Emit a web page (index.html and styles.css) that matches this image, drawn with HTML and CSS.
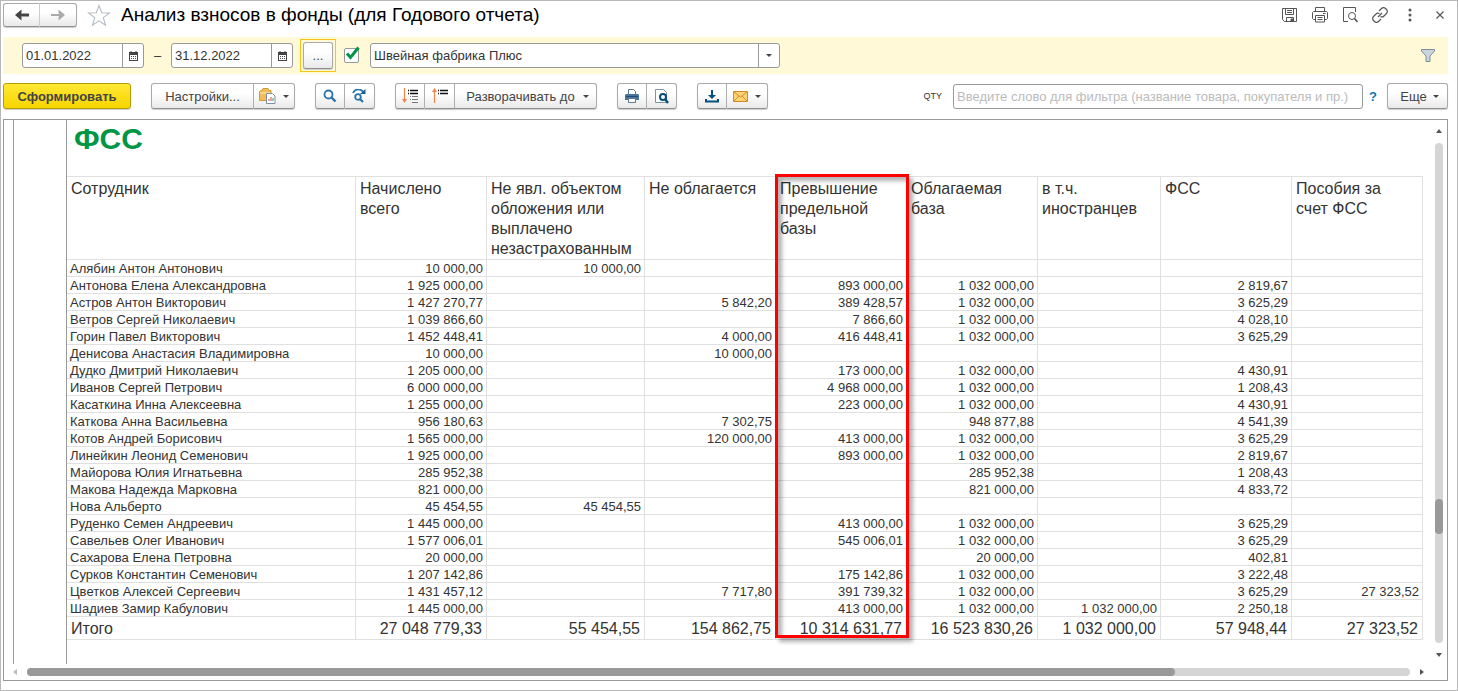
FILE: index.html
```html
<!DOCTYPE html>
<html lang="ru">
<head>
<meta charset="utf-8">
<title>Анализ взносов в фонды</title>
<link rel="stylesheet" href="styles.css">
</head>
<body>
<main class="window">
  <header class="titlebar">
    <div class="group nav">
      <button class="btn" aria-label="Назад"><svg width="14" height="12" viewBox="0 0 14 12"><path d="M4 6h10" stroke="#444" stroke-width="3"/><path d="M0 6L6.500.5V4L5 6l1.500 2v3.500z" fill="#444"/></svg></button>
      <button class="btn light" aria-label="Вперед"><svg width="14" height="12" viewBox="0 0 14 12"><path d="M0 6h10" stroke="#aaa" stroke-width="2"/><path d="M14 6L7.500.5V4L9 6 7.500 8v3.500z" fill="#aaa"/></svg></button>
    </div>
    <button class="plain star" aria-label="В избранное"><svg width="24" height="23" viewBox="0 0 24 23"><path d="M12 1.500l2.700 7.200 7.800.2-6.200 4.700 2.200 7.700L12 16.900l-6.500 4.400 2.200-7.700L1.500 8.900l7.800-.2z" fill="#fff" stroke="#b3bac3" stroke-width="1.100"/></svg></button>
    <h1 class="title">Анализ взносов в фонды (для Годового отчета)</h1>
    <div class="window-tools">
      <button class="plain" aria-label="Сохранить"><svg width="16" height="16" viewBox="0 0 16 16" fill="none" stroke="#555"><path d="M.5 1.500h14v13h-12l-2-2zM3.500 1.500v6h8v-6M5 3.500h5M5 5.500h5M4.500 14.500v-4h7v4"/><path d="M9 12h2v2H9z" fill="#555"/></svg></button>
      <button class="plain" aria-label="Печать"><svg width="16" height="16" viewBox="0 0 16 16" fill="none" stroke="#555"><path d="M3.500 4.500v-4h9v4M3.500 12.500h-2l-1-1v-6l1-1h13l1 1v6l-1 1h-2M3.500 8.500h9v6.500h-9zM5.500 10.500h5M5.500 12.500h5M11 6.500h2.500"/></svg></button>
      <button class="plain" aria-label="Просмотр"><svg width="16" height="16" viewBox="0 0 16 16" fill="none" stroke="#555"><path d="M6 14.500H1.500v-14h12V5"/><circle cx="10" cy="9" r="3.500"/><path d="M12.500 11.500l3 3.500" stroke-width="1.600"/></svg></button>
      <button class="plain" aria-label="Ссылка"><svg width="16" height="16" viewBox="0 0 16 16" fill="none" stroke="#555" stroke-width="1.200"><path d="M7 4l2.500-2.500a2.800 2.800 0 0 1 4 0l1 1a2.800 2.800 0 0 1 0 4L12 9a2.800 2.800 0 0 1-3.500.5M9 12l-2.500 2.500a2.800 2.800 0 0 1-4 0l-1-1a2.800 2.800 0 0 1 0-4L4 7a2.800 2.800 0 0 1 3.500-.5M6 10l4-4"/></svg></button>
      <button class="plain" aria-label="Меню"><svg width="16" height="16" viewBox="0 0 16 16" fill="#555"><circle cx="8" cy="3" r="1.500"/><circle cx="8" cy="8" r="1.500"/><circle cx="8" cy="13" r="1.500"/></svg></button>
      <button class="plain" aria-label="Закрыть"><svg width="16" height="16" viewBox="0 0 16 16"><path d="M4.500 4.500l7 7M11.500 4.500l-7 7" stroke="#555" stroke-width="1.200"/></svg></button>
    </div>
  </header>

  <section class="filters">
    <div class="field date">
      <input type="text" aria-label="Начало периода" value="01.01.2022">
      <button aria-label="Выбрать дату начала"><svg width="9" height="10" viewBox="0 0 9 10"><path d="M0 1h9v9H0z" fill="#444"/><path d="M1 4h7v5H1z" fill="#fff"/><path d="M2 0v2M7 0v2" stroke="#444"/><path d="M2 5.500h5M2 7.500h5" stroke="#444" stroke-dasharray="1 1"/></svg></button>
    </div>
    <span class="dash">–</span>
    <div class="field date">
      <input type="text" aria-label="Конец периода" value="31.12.2022">
      <button aria-label="Выбрать дату конца"><svg width="9" height="10" viewBox="0 0 9 10"><path d="M0 1h9v9H0z" fill="#444"/><path d="M1 4h7v5H1z" fill="#fff"/><path d="M2 0v2M7 0v2" stroke="#444"/><path d="M2 5.500h5M2 7.500h5" stroke="#444" stroke-dasharray="1 1"/></svg></button>
    </div>
    <div class="focus"><button class="btn dots" aria-label="Выбрать период">...</button></div>
    <label class="check"><input type="checkbox" checked aria-label="Организация"><svg width="16" height="16" viewBox="0 0 16 16"><path d="M3 7.500l3.500 4L14.500 1.500" fill="none" stroke="#009646" stroke-width="3"/></svg></label>
    <div class="field company">
      <input type="text" aria-label="Название организации" value="Швейная фабрика Плюс">
      <button aria-label="Выбрать организацию"><i class="caret"></i></button>
    </div>
    <button class="plain funnel" aria-label="Фильтр"><svg width="14" height="13" viewBox="0 0 14 13"><path d="M.5.5h13v1.500L9 7v5.500H5V7L.5 2z" fill="#cbd5df" stroke="#7f8b97"/></svg></button>
  </section>

  <section class="toolbar">
    <button class="btn primary">Сформировать</button>
    <div class="group settings">
      <button class="btn wide">Настройки...</button>
      <button class="btn drop" aria-label="Варианты отчета"><svg width="17" height="16" viewBox="0 0 17 16"><path d="M.5 12.500v-9l1.500-1h1l1-2h5l1 2h2v10z" fill="#f1bd59" stroke="#d19a32"/><path d="M1 5h10" stroke="#fff0bd"/><path d="M7.500 5.500h6l2.500 2.500v7.500H7.500z" fill="#fff" stroke="#7c91a4"/><path d="M10 13v-2" stroke="#bd4778"/><path d="M12 13V9" stroke="#e1482e"/><path d="M14 13v-3" stroke="#2b9a57"/></svg><i class="caret"></i></button>
    </div>
    <div class="group">
      <button class="btn icon" aria-label="Найти"><svg width="14" height="14" viewBox="0 0 14 14" fill="none" stroke="#2973a9"><circle cx="5.500" cy="5.500" r="4" stroke-width="1.800"/><path d="M8.500 8.500l4 4" stroke-width="2.400"/></svg></button>
      <button class="btn icon" aria-label="Найти далее"><svg width="15" height="14" viewBox="0 0 15 14" fill="none" stroke="#2973a9"><path d="M1 4C3-.5 8-.5 11 2.500" stroke-width="1.800"/><path d="M13.500 0v5H8z" fill="#17618f" stroke="none"/><circle cx="6" cy="8" r="2.800" stroke-width="1.800"/><path d="M8 10l3 3" stroke-width="2.200"/></svg></button>
    </div>
    <div class="group">
      <button class="btn icon" aria-label="Развернуть"><svg width="16" height="16" viewBox="0 0 16 16"><path d="M2.500 0v13" stroke="#f58247" stroke-width="1.200"/><path d="M0 11h5l-2.500 4z" fill="#f58247"/><path d="M6 2.500h1M8 2.500h8M6 5.500h1M8 5.500h8" stroke="#111" stroke-width="1.400"/><path d="M8 8.500h1M10 8.500h6M8 11.500h1M10 11.500h6M10 14.500h6" stroke="#777"/></svg></button>
      <button class="btn icon" aria-label="Свернуть"><svg width="16" height="16" viewBox="0 0 16 16"><path d="M2.500 3v12" stroke="#f58247" stroke-width="1.200"/><path d="M0 4h5L2.500 0z" fill="#f58247"/><path d="M6 2.500h1M8 2.500h8M6 5.500h1M8 5.500h8" stroke="#111" stroke-width="1.400"/></svg></button>
      <button class="btn expand">Разворачивать до<i class="caret"></i></button>
    </div>
    <div class="group">
      <button class="btn icon" aria-label="Печать отчета"><svg width="14" height="14" viewBox="0 0 14 14"><path d="M3.500 6V.5h5L10.500 2.500V6" fill="#fff" stroke="#60788c"/><path d="M1 5h12l1 1v5H0V6z" fill="#49759d"/><path d="M1 7.500h12" stroke="#194e78"/><path d="M3.500 9.500h7v4h-7z" fill="#fff" stroke="#60788c"/></svg></button>
      <button class="btn icon" aria-label="Предварительный просмотр"><svg width="14" height="15" viewBox="0 0 14 15"><path d="M.5.5h8l3 3v10H.5z" fill="#fff" stroke="#7e92a5"/><circle cx="8" cy="8" r="3" fill="#fff" stroke="#054e7d" stroke-width="2"/><path d="M10 10l3 4" stroke="#054e7d" stroke-width="2.400"/></svg></button>
    </div>
    <div class="group">
      <button class="btn icon" aria-label="Сохранить отчет"><svg width="14" height="13" viewBox="0 0 14 13"><path d="M7 0v8M1 9v2.500h12V9" fill="none" stroke="#054e7d" stroke-width="2"/><path d="M3 5h8L7 9z" fill="#054e7d"/></svg></button>
      <button class="btn drop" aria-label="Отправить"><svg width="15" height="11" viewBox="0 0 15 11"><path d="M.5.5h14v10H.5z" fill="#ffd477" stroke="#d18b26"/><path d="M1 1l6.500 5L14 1M1 10l5-5M14 10L9 5" fill="none" stroke="#d18b26"/></svg><i class="caret"></i></button>
    </div>
    <label class="qty" for="search">QTY</label>
    <input id="search" class="search" type="text" placeholder="Введите слово для фильтра (название товара, покупателя и пр.)">
    <a class="help" href="#">?</a>
    <button class="btn more">Еще<i class="caret"></i></button>
  </section>

  <section class="sheet">
    <div class="gutter"></div>
    <div class="groups"></div>
    <article class="report">
      <h2>ФСС</h2>
      <div class="table-box">
        <table>
          <colgroup><col class="c-name"><col class="c-131"><col class="c-158"><col class="c-131"><col class="c-131"><col class="c-131"><col class="c-123"><col class="c-131"><col class="c-131"></colgroup>
          <thead><tr><th>Сотрудник</th><th>Начислено всего</th><th>Не явл. объектом обложения или выплачено незастрахованным</th><th>Не облагается</th><th>Превышение предельной базы</th><th>Облагаемая база</th><th>в т.ч. иностранцев</th><th>ФСС</th><th>Пособия за счет ФСС</th></tr></thead>
          <tbody>
            <tr><td>Алябин Антон Антонович</td><td>10 000,00</td><td>10 000,00</td><td></td><td></td><td></td><td></td><td></td><td></td></tr>
            <tr><td>Антонова Елена Александровна</td><td>1 925 000,00</td><td></td><td></td><td>893 000,00</td><td>1 032 000,00</td><td></td><td>2 819,67</td><td></td></tr>
            <tr><td>Астров Антон Викторович</td><td>1 427 270,77</td><td></td><td>5 842,20</td><td>389 428,57</td><td>1 032 000,00</td><td></td><td>3 625,29</td><td></td></tr>
            <tr><td>Ветров Сергей Николаевич</td><td>1 039 866,60</td><td></td><td></td><td>7 866,60</td><td>1 032 000,00</td><td></td><td>4 028,10</td><td></td></tr>
            <tr><td>Горин Павел Викторович</td><td>1 452 448,41</td><td></td><td>4 000,00</td><td>416 448,41</td><td>1 032 000,00</td><td></td><td>3 625,29</td><td></td></tr>
            <tr><td>Денисова Анастасия Владимировна</td><td>10 000,00</td><td></td><td>10 000,00</td><td></td><td></td><td></td><td></td><td></td></tr>
            <tr><td>Дудко Дмитрий Николаевич</td><td>1 205 000,00</td><td></td><td></td><td>173 000,00</td><td>1 032 000,00</td><td></td><td>4 430,91</td><td></td></tr>
            <tr><td>Иванов Сергей Петрович</td><td>6 000 000,00</td><td></td><td></td><td>4 968 000,00</td><td>1 032 000,00</td><td></td><td>1 208,43</td><td></td></tr>
            <tr><td>Касаткина Инна Алексеевна</td><td>1 255 000,00</td><td></td><td></td><td>223 000,00</td><td>1 032 000,00</td><td></td><td>4 430,91</td><td></td></tr>
            <tr><td>Каткова Анна Васильевна</td><td>956 180,63</td><td></td><td>7 302,75</td><td></td><td>948 877,88</td><td></td><td>4 541,39</td><td></td></tr>
            <tr><td>Котов Андрей Борисович</td><td>1 565 000,00</td><td></td><td>120 000,00</td><td>413 000,00</td><td>1 032 000,00</td><td></td><td>3 625,29</td><td></td></tr>
            <tr><td>Линейкин Леонид Семенович</td><td>1 925 000,00</td><td></td><td></td><td>893 000,00</td><td>1 032 000,00</td><td></td><td>2 819,67</td><td></td></tr>
            <tr><td>Майорова Юлия Игнатьевна</td><td>285 952,38</td><td></td><td></td><td></td><td>285 952,38</td><td></td><td>1 208,43</td><td></td></tr>
            <tr><td>Макова Надежда Марковна</td><td>821 000,00</td><td></td><td></td><td></td><td>821 000,00</td><td></td><td>4 833,72</td><td></td></tr>
            <tr><td>Нова Альберто</td><td>45 454,55</td><td>45 454,55</td><td></td><td></td><td></td><td></td><td></td><td></td></tr>
            <tr><td>Руденко Семен Андреевич</td><td>1 445 000,00</td><td></td><td></td><td>413 000,00</td><td>1 032 000,00</td><td></td><td>3 625,29</td><td></td></tr>
            <tr><td>Савельев Олег Иванович</td><td>1 577 006,01</td><td></td><td></td><td>545 006,01</td><td>1 032 000,00</td><td></td><td>3 625,29</td><td></td></tr>
            <tr><td>Сахарова Елена Петровна</td><td>20 000,00</td><td></td><td></td><td></td><td>20 000,00</td><td></td><td>402,81</td><td></td></tr>
            <tr><td>Сурков Константин Семенович</td><td>1 207 142,86</td><td></td><td></td><td>175 142,86</td><td>1 032 000,00</td><td></td><td>3 222,48</td><td></td></tr>
            <tr><td>Цветков Алексей Сергеевич</td><td>1 431 457,12</td><td></td><td>7 717,80</td><td>391 739,32</td><td>1 032 000,00</td><td></td><td>3 625,29</td><td>27 323,52</td></tr>
            <tr><td>Шадиев Замир Кабулович</td><td>1 445 000,00</td><td></td><td></td><td>413 000,00</td><td>1 032 000,00</td><td>1 032 000,00</td><td>2 250,18</td><td></td></tr>
          </tbody>
          <tfoot><tr><td>Итого</td><td>27 048 779,33</td><td>55 454,55</td><td>154 862,75</td><td>10 314 631,77</td><td>16 523 830,26</td><td>1 032 000,00</td><td>57 948,44</td><td>27 323,52</td></tr></tfoot>
        </table>
        <div class="highlight"></div>
      </div>
    </article>
    <div class="vscroll"><i class="arrow up"></i><div class="vtrack"><div class="vthumb"></div></div><i class="arrow down"></i></div>
    <div class="hscroll"><i class="arrow left"></i><div class="htrack"><div class="hthumb"></div></div><i class="arrow right"></i></div>
  </section>
</main>
</body>
</html>
```
FILE: styles.css
```css
* { box-sizing: border-box; }
body { margin: 0; background: #fff; color: #333; font: 13px "Liberation Sans", Arial, sans-serif; }
button, input { font: inherit; color: inherit; }
button { padding: 0; cursor: pointer; }
svg { display: block; flex: none; }

.window { min-height: 100vh; display: flex; flex-direction: column; border: 1px solid #b8b8b8; padding: 0 9px 9px 2px; }

.plain { border: 0; background: none; }
.btn { display: flex; align-items: center; justify-content: center; height: 26px; border: 1px solid #aaa; border-bottom-color: #8f8f8f; border-radius: 3px; background: linear-gradient(#fff 40%, #e9e9e9); box-shadow: 0 1px 1px #ccc; color: #444; }
.group { display: flex; }
.group .btn:not(:first-child) { border-left: 0; border-top-left-radius: 0; border-bottom-left-radius: 0; }
.group .btn:not(:last-child) { border-top-right-radius: 0; border-bottom-right-radius: 0; }
.caret { width: 0; height: 0; border: 3px solid transparent; border-top-color: #444; border-bottom: 0; }

.titlebar { display: flex; align-items: center; height: 36px; padding-bottom: 8px; }
.nav .btn { width: 37px; height: 24px; }
.nav .btn:first-child { border-right-color: #ccc; }
.star { margin-left: 10px; }
.title { margin: 0 0 0 10px; color: #000; font-size: 19px; font-weight: 400; line-height: 26px; }
.window-tools { display: flex; gap: 14px; margin-left: auto; }

.filters { display: flex; align-items: center; height: 37px; padding: 0 13px 0 19px; background: #fff9d8; }
.field { display: flex; height: 25px; border: 1px solid #999; border-radius: 3px; background: #fff; }
.field input { flex: 1; min-width: 0; padding: 0 3px; border: 0; background: none; outline: 0; }
.field button { display: flex; align-items: center; justify-content: center; width: 21px; border: 0; border-left: 1px solid #999; background: none; }
.date { width: 122px; }
.dash { width: 27px; text-align: center; }
.focus { margin-left: 7px; padding: 2px; border: 1px solid #f5c518; }
.dots { width: 30px; height: 27px; }
.check { display: grid; width: 16px; height: 16px; margin: 0 10px 0 8px; }
.check input { grid-area: 1 / 1; appearance: none; width: 15px; height: 15px; margin: 0; border: 1px solid #999; border-radius: 2px; background: #fff; }
.check svg { grid-area: 1 / 1; margin-top: -2px; }
.company { width: 410px; }
.funnel { margin-left: auto; }

.toolbar { display: flex; align-items: center; padding: 9px 0 10px; gap: 20px; }
.btn.primary { width: 128px; border-color: #b59c00; background: linear-gradient(#ffe835, #f7d500); font-weight: 700; }
.wide { width: 103px; }
.icon { width: 30px; }
.drop { gap: 7px; width: 41px; }
.expand { gap: 8px; width: 142px; padding-left: 4px; }
.more { gap: 6px; width: 61px; padding-left: 4px; }
.qty { margin-left: auto; font-size: 9px; color: #333; }
.search { width: 410px; height: 25px; margin-left: -9px; padding: 0 3px; border: 1px solid #999; border-radius: 3px; }
.search::placeholder { color: #bbb; opacity: 1; }
.help { margin: 0 -10px 0 -14px; color: #0b76b8; font-weight: 700; text-decoration: none; }

.sheet { flex: 1; display: grid; grid-template: 1fr 16px / 10px 53px minmax(0, 1fr) 16px; border: 1px solid #999; }
.gutter, .groups { border-right: 1px solid #999; }
.report h2 { margin: 0; height: 56px; padding: 2px 7px; color: #009646; font-size: 30px; line-height: 34px; }
.table-box { position: relative; }
table { width: 1356px; table-layout: fixed; border-collapse: separate; border-spacing: 0; border-top: 1px solid #e0e0e0; }
.c-name { width: 289px; }
.c-123 { width: 123px; }
.c-131 { width: 131px; }
.c-158 { width: 158px; }
th, td { border: solid #e0e0e0; border-width: 0 1px 1px 0; }
th { height: 83px; padding: 2px 8px 0 4px; font-size: 16px; line-height: 20px; font-weight: 400; text-align: left; vertical-align: top; }
td { height: 17px; padding: 2px 3px 0; line-height: 14px; text-align: right; white-space: nowrap; }
td:first-child { text-align: left; }
tfoot td { height: 23px; padding: 2px 4px 0; font-size: 16px; line-height: 20px; }
.highlight { position: absolute; top: -2px; left: 708px; width: 134px; height: 464px; border: 3px solid #f00; box-shadow: 4px 4px 4px rgba(0, 0, 0, .3), inset 4px 4px 4px rgba(0, 0, 0, .3); pointer-events: none; }

.vscroll { display: flex; flex-direction: column; align-items: center; padding: 9px 0 7px; }
.vtrack { flex: 1; width: 8px; margin: 10px 0; border-radius: 4px; background: #d5d5d5; }
.vthumb { height: 7%; margin-top: 356px; border-radius: 4px; background: #999; }
.hscroll { grid-column: 1 / 4; display: flex; align-items: center; padding: 0 7px 0 9px; }
.htrack { flex: 1; height: 8px; margin: 0 10px; border-radius: 4px; background: #d5d5d5; }
.hthumb { width: 83%; height: 8px; border-radius: 4px; background: #999; }
.arrow { width: 0; height: 0; border: 3px solid transparent; }
.up { border-top: 0; border-bottom: 4px solid #555; }
.down { border-bottom: 0; border-top: 4px solid #555; }
.left { border-left: 0; border-right: 4px solid #bbb; }
.right { border-right: 0; border-left: 4px solid #555; }
```
